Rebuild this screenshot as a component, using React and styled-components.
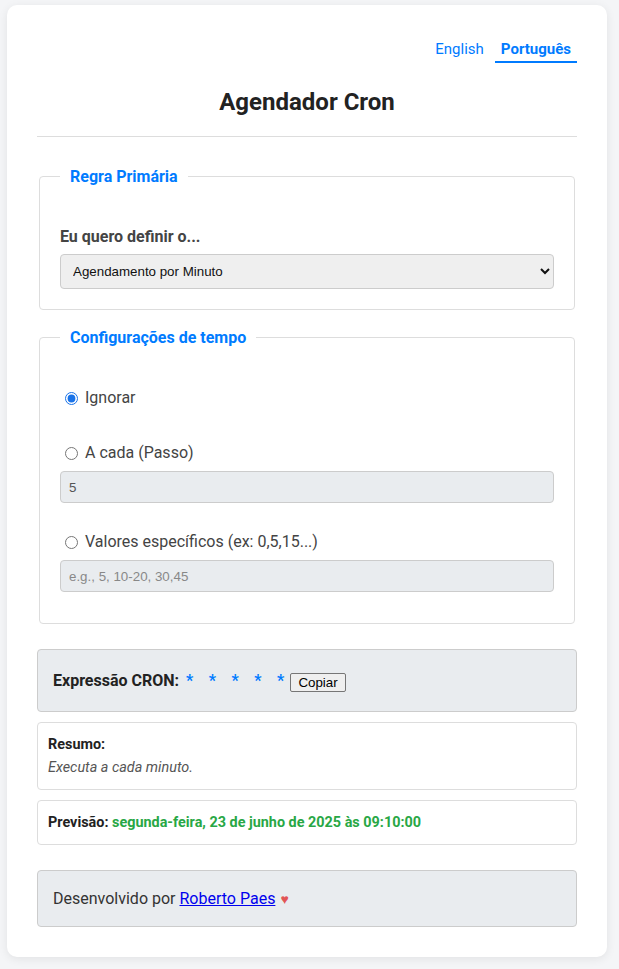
import React from "react";
import styled, { createGlobalStyle } from "styled-components";

const Global = createGlobalStyle`
  html, body { margin: 0; padding: 0; background: #f4f5f7; }
  body { font-family: Roboto, "Noto Sans", sans-serif; color: #333; }
  * { box-sizing: border-box; }
`;

const Page = styled.div`
  padding: 5px 12px 13px 7px;
`;

const Card = styled.div`
  width: 600px;
  background: #fff;
  border-radius: 10px;
  box-shadow: 0 2px 10px rgba(0, 0, 0, 0.08);
  padding: 30px 30px 30px;
`;

const LangBar = styled.div`
  display: flex;
  justify-content: flex-end;
  gap: 5px;
`;

const LangButton = styled.button`
  background: none;
  border: none;
  border-bottom: 2px solid ${(p) => (p.$active ? "#007bff" : "transparent")};
  color: #007bff;
  font-family: Roboto, sans-serif;
  font-size: 15px;
  line-height: 18px;
  font-weight: ${(p) => (p.$active ? 700 : 400)};
  padding: 5px 6px 3px;
  cursor: pointer;
`;

const Title = styled.h1`
  margin: 25px 0 0;
  text-align: center;
  font-size: 24px;
  font-weight: 700;
  color: #222;
  padding-bottom: 20px;
  border-bottom: 1px solid #ddd;
  line-height: 28px;
`;

const Fieldset = styled.fieldset`
  margin: ${(p) => p.$top}px 2px 0;
  border: 1px solid #ddd;
  border-radius: 4px;
  padding: 20px 20px ${(p) => p.$bottom}px;
  min-width: 0;
`;

const Legend = styled.legend`
  color: #007bff;
  font-weight: 700;
  font-size: 16px;
  padding: 0 10px;
  margin-left: 0;
  line-height: 19px;
`;

const FieldLabel = styled.label`
  display: block;
  margin-top: 21px;
  margin-bottom: 8px;
  font-weight: 700;
  font-size: 16px;
  color: #444;
  line-height: 19px;
`;

const Select = styled.select`
  width: 100%;
  height: 35px;
  padding: 0 8px;
  background: #efefef;
  border: 1px solid #ccc;
  border-radius: 4px;
  font-family: "Liberation Sans", Arial, sans-serif;
  font-size: 13.33px;
  color: #111;
`;

const Option = styled.div`
  margin-top: ${(p) => p.$top}px;
`;

const RadioLabel = styled.label`
  display: flex;
  align-items: center;
  gap: 6px;
  font-size: 16px;
  color: #444;
  line-height: 20px;
  margin-left: 4px;
`;

const Radio = styled.input`
  margin: 0 1px 0 1px;
  width: 13px;
  height: 13px;
  accent-color: #1a73e8;
`;

const TextInput = styled.input`
  display: block;
  width: 100%;
  height: 32px;
  margin-top: 8px;
  padding: 0 8px;
  background: #e9ecef;
  border: 1px solid #ccc;
  border-radius: 4px;
  font-family: "Liberation Sans", Arial, sans-serif;
  font-size: 13.33px;
  color: #555;
  &::placeholder { color: #888; }
`;

const CronBox = styled.div`
  margin-top: 25px;
  background: #e9ecef;
  border: 1px solid #ccc;
  border-radius: 4px;
  padding: 0 15px;
  height: 63px;
  display: flex;
  align-items: center;
  font-size: 16px;
  font-weight: 700;
  color: #222;
`;

const CronValue = styled.span`
  color: #007bff;
  margin-left: 7px;
  display: inline-flex;
  gap: 15.5px;
  margin-right: 6px;
`;

const CopyButton = styled.button`
  font-family: "Liberation Sans", Arial, sans-serif;
  font-size: 13.33px;
  font-weight: 400;
  padding: 1px 7px;
  border: 1px solid #767676;
  border-radius: 2px;
  background: #efefef;
  color: #000;
  margin-top: 4px;
`;

const InfoBox = styled.div`
  margin-top: 10px;
  border: 1px solid #ddd;
  border-radius: 4px;
  padding: 10px;
  font-size: 14.4px;
  line-height: 23px;
`;

const Strong = styled.strong`
  color: #222;
  display: ${(p) => (p.$block ? "block" : "inline")};
`;

const Summary = styled.em`
  color: #555;
`;

const Forecast = styled.span`
  color: #28a745;
  font-weight: 700;
`;

const Footer = styled.footer`
  margin-top: 25px;
  background: #e9ecef;
  border: 1px solid #ccc;
  border-radius: 4px;
  height: 57px;
  padding: 0 15px;
  display: flex;
  align-items: center;
  font-size: 16px;
  color: #333;
`;

const Link = styled.a`
  color: #0000ee;
  margin-left: 4px;
`;

const Heart = styled.span`
  color: #e25555;
  margin-left: 5px;
  font-size: 14px;
`;

export default function App() {
  return (
    <Page>
      <Global />
      <Card>
        <LangBar>
          <LangButton>English</LangButton>
          <LangButton $active>Português</LangButton>
        </LangBar>
        <Title>Agendador Cron</Title>

        <Fieldset $top={30} $bottom={20}>
          <Legend>Regra Primária</Legend>
          <FieldLabel>Eu quero definir o...</FieldLabel>
          <Select defaultValue="minute">
            <option value="minute">Agendamento por Minuto</option>
          </Select>
        </Fieldset>

        <Fieldset $top={18} $bottom={31}>
          <Legend>Configurações de tempo</Legend>
          <Option $top={21}>
            <RadioLabel>
              <Radio type="radio" name="m" defaultChecked />
              Ignorar
            </RadioLabel>
          </Option>
          <Option $top={35}>
            <RadioLabel>
              <Radio type="radio" name="m" />
              A cada (Passo)
            </RadioLabel>
            <TextInput disabled defaultValue="5" />
          </Option>
          <Option $top={29}>
            <RadioLabel>
              <Radio type="radio" name="m" />
              Valores específicos (ex: 0,5,15...)
            </RadioLabel>
            <TextInput disabled placeholder="e.g., 5, 10-20, 30,45" />
          </Option>
        </Fieldset>

        <CronBox>
          Expressão CRON:
          <CronValue>
            <span>*</span><span>*</span><span>*</span><span>*</span><span>*</span>
          </CronValue>
          <CopyButton>Copiar</CopyButton>
        </CronBox>

        <InfoBox>
          <Strong $block>Resumo:</Strong>
          <Summary>Executa a cada minuto.</Summary>
        </InfoBox>

        <InfoBox>
          <Strong>Previsão:</Strong>{" "}
          <Forecast>segunda-feira, 23 de junho de 2025 às 09:10:00</Forecast>
        </InfoBox>

        <Footer>
          Desenvolvido por
          <Link href="#">Roberto Paes</Link>
          <Heart>♥</Heart>
        </Footer>
      </Card>
    </Page>
  );
}
